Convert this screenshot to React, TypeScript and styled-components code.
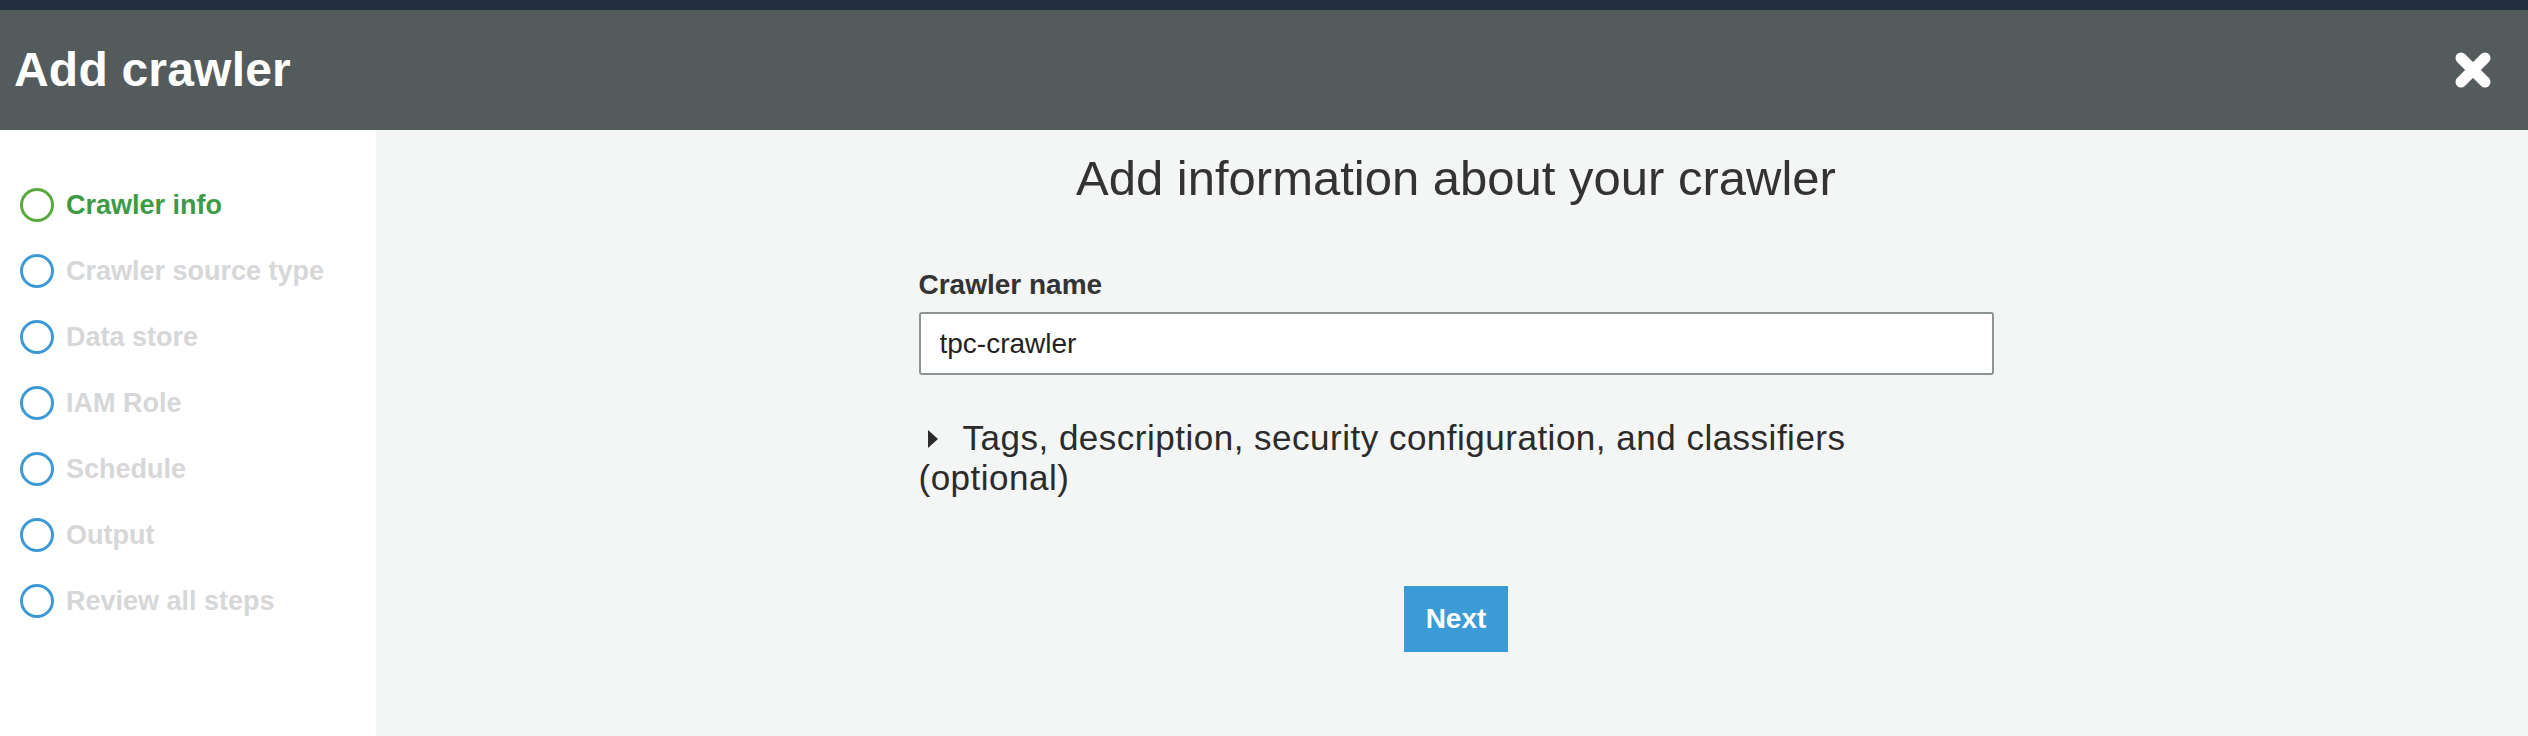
import React from 'react'
import styled, { createGlobalStyle } from 'styled-components'

const GlobalStyle = createGlobalStyle`
  html, body {
    margin: 0;
    padding: 0;
    height: 100%;
  }
  body {
    font-family: "Liberation Sans", Arial, sans-serif;
    background: #f4f5f5;
  }
  #root {
    height: 100%;
  }
`

const Page = styled.div`
  display: flex;
  flex-direction: column;
  height: 100vh;
`

const TopStrip = styled.div`
  height: 10px;
  background: #232f3e;
`

const Header = styled.header`
  height: 120px;
  background: #545b5d;
  display: flex;
  align-items: center;
  justify-content: space-between;
  padding: 0 36px 0 14px;
`

const Title = styled.h1`
  margin: 0;
  color: #fff;
  font-size: 48px;
  font-weight: bold;
  line-height: 56px;
  letter-spacing: 0.2px;
`

const CloseButton = styled.button`
  border: 0;
  background: none;
  padding: 0;
  width: 38px;
  height: 38px;
  cursor: pointer;
  display: flex;
`

const Body = styled.div`
  flex: 1;
  display: flex;
`

const Sidebar = styled.nav`
  width: 376px;
  background: #fff;
  padding-top: 42px;
  padding-left: 20px;
  box-sizing: border-box;
`

const Step = styled.div`
  height: 66px;
  display: flex;
  align-items: center;
  gap: 12px;
`

const StepCircle = styled.span<{ $active?: boolean }>`
  width: 34px;
  height: 34px;
  box-sizing: border-box;
  border-radius: 50%;
  border: 3px solid ${(p) => (p.$active ? '#58aa3e' : '#3d9ad7')};
`

const StepLabel = styled.span<{ $active?: boolean }>`
  font-size: 27px;
  font-weight: bold;
  color: ${(p) => (p.$active ? '#3d9b45' : '#d6d7d8')};
`

const Content = styled.main`
  flex: 1;
  display: flex;
  flex-direction: column;
  align-items: center;
  padding: 20px 0 0 8px;
`

const Heading = styled.h2`
  margin: 0;
  font-size: 49px;
  font-weight: normal;
  line-height: 56px;
  color: #333;
`

const Form = styled.div`
  width: 1075px;
  margin-top: 63px;
`

const FieldLabel = styled.label`
  display: block;
  font-size: 28px;
  font-weight: bold;
  line-height: 32px;
  color: #333;
`

const TextInput = styled.input`
  display: block;
  width: 100%;
  height: 63px;
  box-sizing: border-box;
  margin-top: 11px;
  padding: 0 19px;
  border: 2px solid #8e9396;
  border-radius: 3px;
  background: #fff;
  font-family: "Liberation Sans", Arial, sans-serif;
  font-size: 28px;
  color: #222;
  outline: none;
`

const Expander = styled.div`
  margin-top: 43px;
  font-size: 35px;
  line-height: 40px;
  letter-spacing: 0.5px;
  color: #2b2b2b;
  cursor: pointer;
`

const Caret = styled.span`
  display: inline-block;
  width: 0;
  height: 0;
  margin: 0 25px 0 9px;
  border-left: 10px solid #2b2b2b;
  border-top: 9px solid transparent;
  border-bottom: 9px solid transparent;
  vertical-align: 2px;
`

const NextButton = styled.button`
  margin-top: 88px;
  width: 104px;
  height: 66px;
  border: 0;
  background: #3b9bd6;
  color: #fff;
  font-family: "Liberation Sans", Arial, sans-serif;
  font-size: 28px;
  font-weight: bold;
  cursor: pointer;
`

const steps = [
  'Crawler info',
  'Crawler source type',
  'Data store',
  'IAM Role',
  'Schedule',
  'Output',
  'Review all steps',
]

const App = () => {
  return (
    <>
      <GlobalStyle />
      <Page>
        <TopStrip />
        <Header>
          <Title>Add crawler</Title>
          <CloseButton aria-label="Close">
            <svg width="38" height="38" viewBox="0 0 38 38">
              <path
                d="M7 7 L31 31 M31 7 L7 31"
                stroke="#fff"
                strokeWidth="11"
                strokeLinecap="round"
              />
            </svg>
          </CloseButton>
        </Header>
        <Body>
          <Sidebar>
            {steps.map((s, i) => (
              <Step key={s}>
                <StepCircle $active={i === 0} />
                <StepLabel $active={i === 0}>{s}</StepLabel>
              </Step>
            ))}
          </Sidebar>
          <Content>
            <Heading>Add information about your crawler</Heading>
            <Form>
              <FieldLabel htmlFor="crawler-name">Crawler name</FieldLabel>
              <TextInput id="crawler-name" defaultValue="tpc-crawler" />
              <Expander>
                <Caret />
                Tags, description, security configuration, and classifiers (optional)
              </Expander>
            </Form>
            <NextButton>Next</NextButton>
          </Content>
        </Body>
      </Page>
    </>
  )
}

export default App
